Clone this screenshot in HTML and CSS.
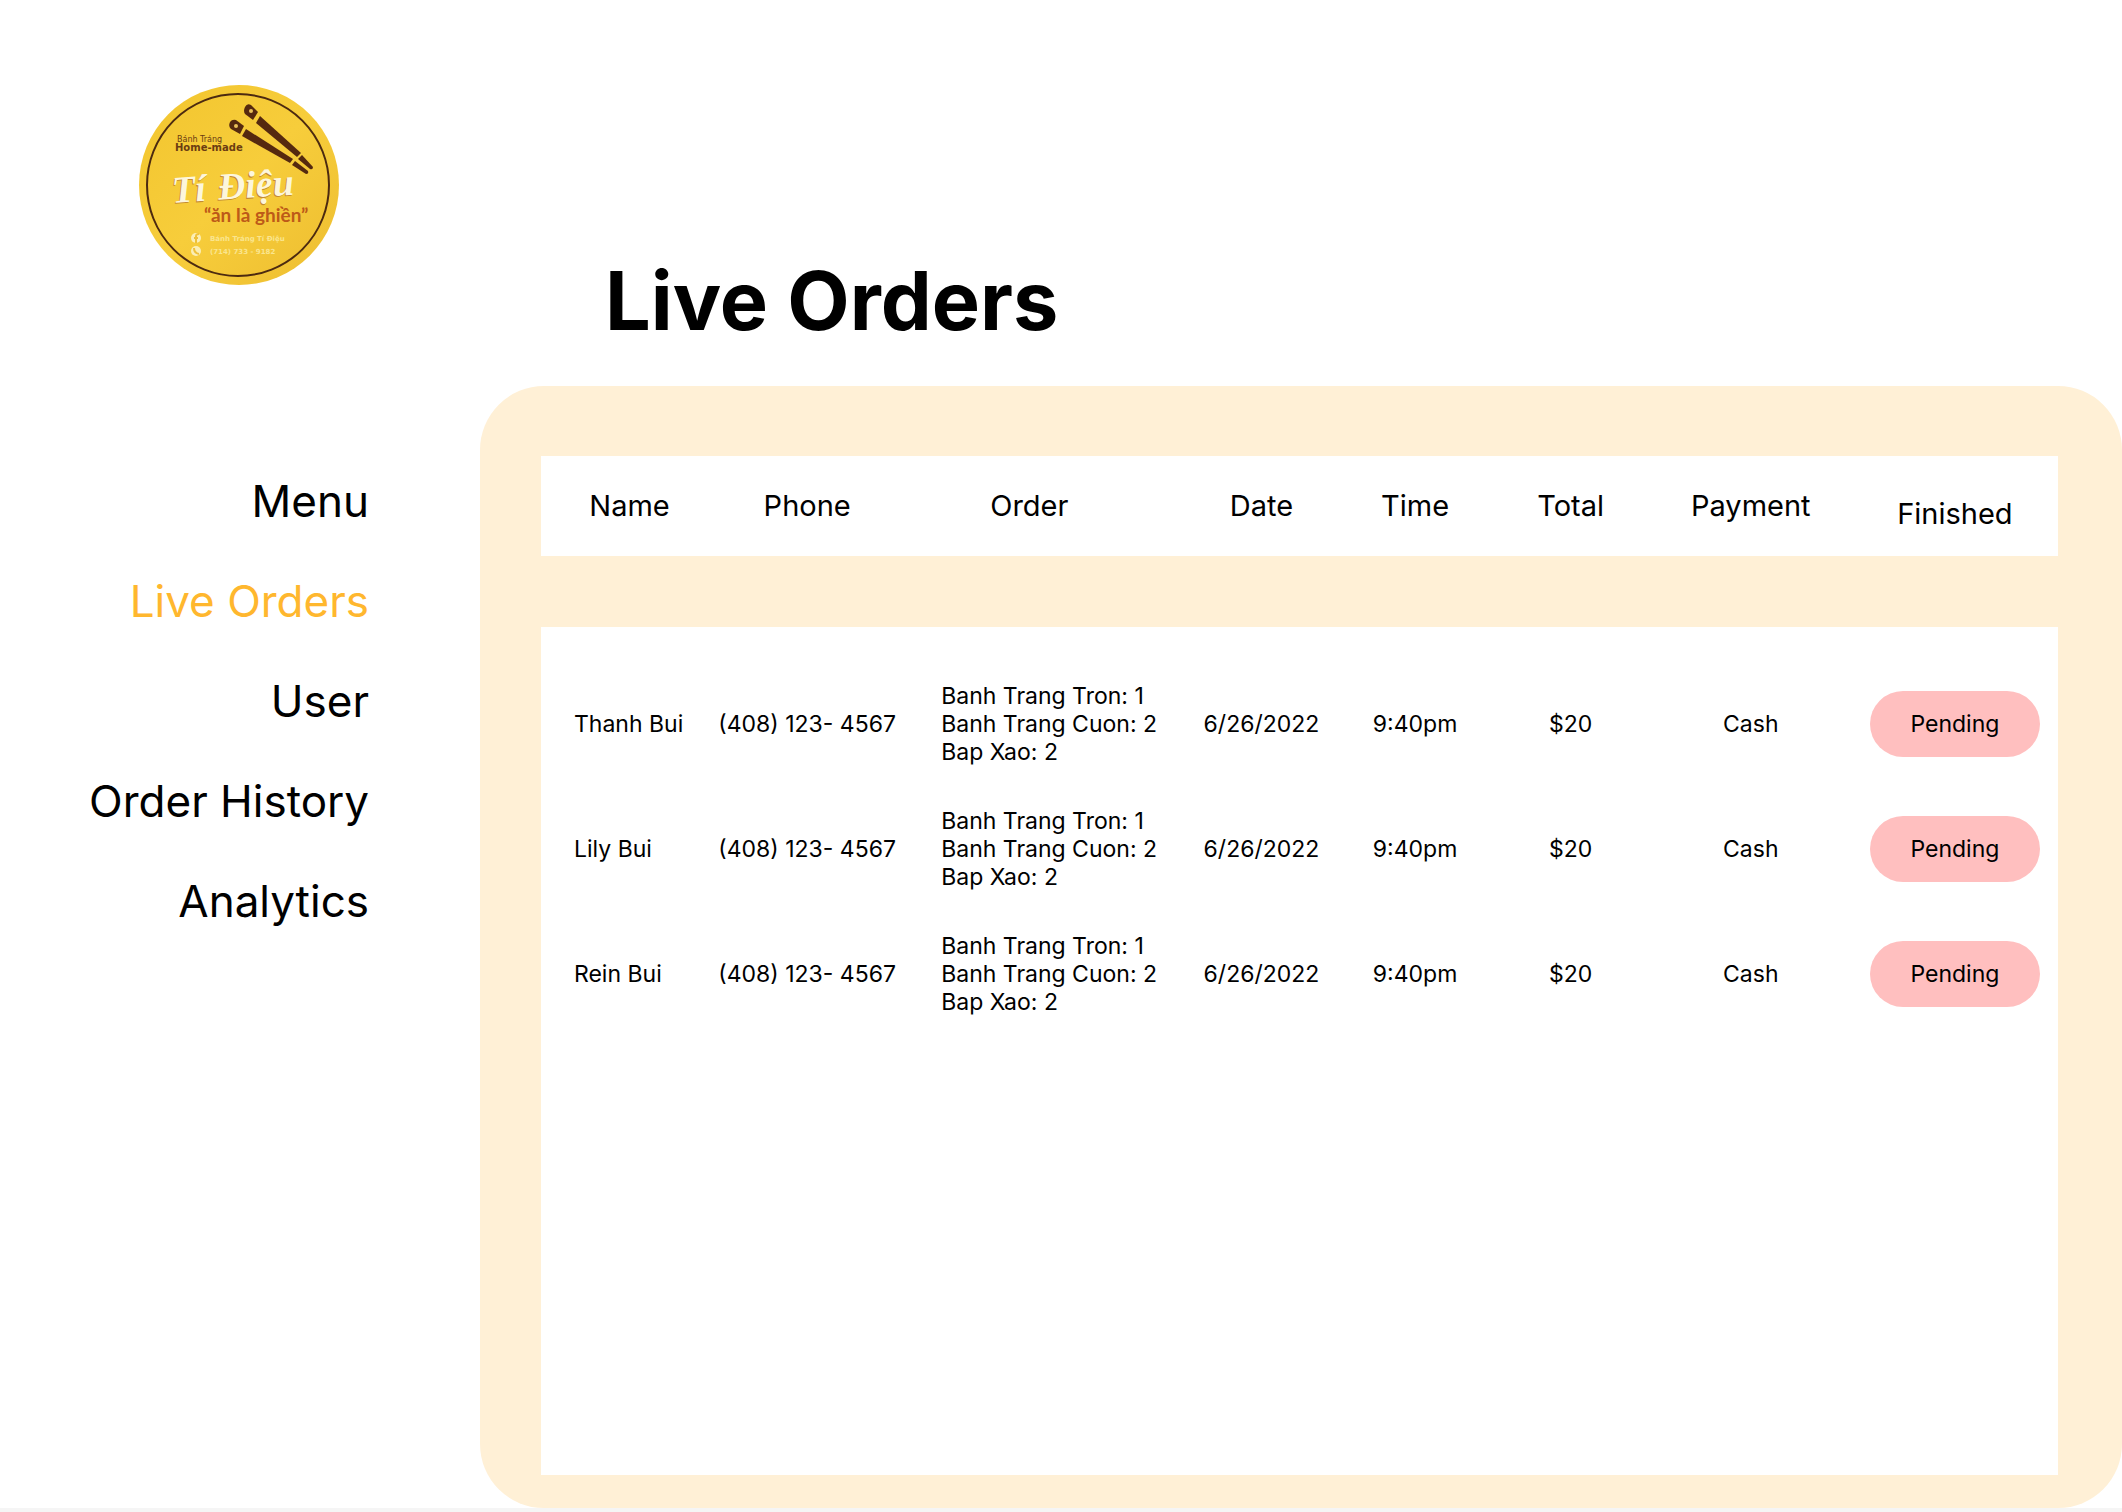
FILE: index.html
```html
<!DOCTYPE html>
<html lang="en">
<head>
  <meta charset="utf-8">
  <meta name="viewport" content="width=device-width, initial-scale=1">
  <title>Live Orders</title>
  <link rel="stylesheet" href="styles.css">
</head>
<body>
  <div class="app">
    <aside class="sidebar">
      <svg class="logo" viewBox="10 10 200 200" role="img" aria-label="Bánh Tráng Tí Điệu">
        <defs>
          <linearGradient id="disc" x1="0" y1="0" x2="1" y2="1">
            <stop offset="0" stop-color="#f2c52e"/>
            <stop offset="0.5" stop-color="#f7cd3b"/>
            <stop offset="1" stop-color="#edbd30"/>
          </linearGradient>
        </defs>
        <circle cx="110" cy="110" r="100" fill="url(#disc)"/>
        <circle class="logo-ring" cx="109" cy="110" r="91"/>
        <g class="chopsticks">
          <path d="M116 32q2-4 6-2l7 7-5 8-8-6q-2-3 0-7z"/>
          <path d="M131 41l41 37-4 4-41-34z"/>
          <path d="M173 80l11 12q0 3-3 2l-12-10z"/>
          <path d="M101 47q2-3 6-2l8 6-4 8-9-5q-3-3-1-7z"/>
          <path d="M117 54l47 30-3 4-48-27z"/>
          <path d="M166 86l13 10q1 3-2 3l-14-9z"/>
          <circle class="chopstick-dot" cx="122" cy="36" r="2"/>
          <circle class="chopstick-dot" cx="107" cy="51" r="2"/>
        </g>
        <text class="logo-kicker" x="48" y="67">Bánh Tráng</text>
        <text class="logo-made" x="46" y="76">Home-made</text>
        <g transform="rotate(-4 100 115)">
          <text class="logo-name logo-name-shade" x="42" y="125">Tí</text>
          <text class="logo-name logo-name-shade" x="88" y="125">Điệu</text>
          <text class="logo-name" x="43" y="124">Tí</text>
          <text class="logo-name" x="89" y="124">Điệu</text>
        </g>
        <text class="logo-slogan" x="75" y="147">“ăn là ghiền”</text>
        <circle class="logo-mark" cx="67" cy="163" r="5"/>
        <path class="logo-glyph" d="M67 168v-7q0-2 3-2M65 163h4"/>
        <circle class="logo-mark" cx="67" cy="176" r="5"/>
        <path class="logo-glyph" d="M65 173q0 5 5 6"/>
        <text class="logo-contact" x="81" y="166">Bánh Tráng Tí Điệu</text>
        <text class="logo-contact" x="81" y="179">(714) 733 - 9182</text>
      </svg>
      <nav class="nav" aria-label="Main">
        <a class="nav-link" href="#menu">Menu</a>
        <a class="nav-link nav-link-active" href="#live-orders" aria-current="page">Live Orders</a>
        <a class="nav-link" href="#user">User</a>
        <a class="nav-link" href="#order-history">Order History</a>
        <a class="nav-link" href="#analytics">Analytics</a>
      </nav>
    </aside>
    <main class="main">
      <h1 class="title">Live Orders</h1>
      <section class="panel">
        <table class="orders">
          <thead class="orders-head">
            <tr class="row">
              <th scope="col">Name</th>
              <th scope="col">Phone</th>
              <th scope="col">Order</th>
              <th scope="col">Date</th>
              <th scope="col">Time</th>
              <th scope="col">Total</th>
              <th scope="col">Payment</th>
              <th scope="col" class="finished">Finished</th>
            </tr>
          </thead>
          <tbody class="orders-body">
            <tr class="row">
              <td class="name">Thanh Bui</td>
              <td>(408) 123- 4567</td>
              <td class="items">Banh Trang Tron: 1<br>Banh Trang Cuon: 2<br>Bap Xao: 2</td>
              <td>6/26/2022</td>
              <td>9:40pm</td>
              <td>$20</td>
              <td>Cash</td>
              <td class="finished"><button class="status" type="button">Pending</button></td>
            </tr>
            <tr class="row">
              <td class="name">Lily Bui</td>
              <td>(408) 123- 4567</td>
              <td class="items">Banh Trang Tron: 1<br>Banh Trang Cuon: 2<br>Bap Xao: 2</td>
              <td>6/26/2022</td>
              <td>9:40pm</td>
              <td>$20</td>
              <td>Cash</td>
              <td class="finished"><button class="status" type="button">Pending</button></td>
            </tr>
            <tr class="row">
              <td class="name">Rein Bui</td>
              <td>(408) 123- 4567</td>
              <td class="items">Banh Trang Tron: 1<br>Banh Trang Cuon: 2<br>Bap Xao: 2</td>
              <td>6/26/2022</td>
              <td>9:40pm</td>
              <td>$20</td>
              <td>Cash</td>
              <td class="finished"><button class="status" type="button">Pending</button></td>
            </tr>
          </tbody>
        </table>
      </section>
    </main>
  </div>
</body>
</html>
```
FILE: styles.css
```css
* {
  box-sizing: border-box;
}

body {
  margin: 0;
  background: #ffffff;
  color: #000000;
  font-family: Inter, "Liberation Sans", sans-serif;
}

.app {
  display: grid;
  grid-template-columns: 480px minmax(0, 1fr);
  min-height: 100vh;
  border-bottom: 4px solid #f5f5f5;
}

/* Sidebar */

.sidebar {
  display: flex;
  flex-direction: column;
  padding: 85px 111px 40px 0;
}

.logo {
  width: 200px;
  height: 200px;
  margin-left: 139px;
}

.nav {
  display: flex;
  flex-direction: column;
  align-items: flex-end;
  gap: 47px;
  margin-top: 190px;
}

.nav-link {
  color: inherit;
  font-size: 44px;
  line-height: 53px;
  text-decoration: none;
  white-space: nowrap;
}

.nav-link-active {
  color: #ffb72e;
}

/* Logo */

.logo-ring {
  fill: none;
  stroke: #4c2a10;
  stroke-width: 2;
}

.chopsticks {
  fill: #55290f;
}

.chopstick-dot {
  fill: #e9c05a;
}

.logo-kicker,
.logo-made {
  fill: #6b3c12;
  font-family: "DejaVu Sans", sans-serif;
  font-weight: 700;
}

.logo-kicker {
  font-size: 8px;
  font-weight: 400;
}

.logo-made {
  font-size: 10px;
}

.logo-name {
  fill: #fdf6dc;
  font-family: "Liberation Serif", serif;
  font-size: 38px;
  font-style: italic;
  font-weight: 700;
}

.logo-name-shade {
  fill: #c48a34;
}

.logo-slogan {
  fill: #bd5a18;
  font-family: Lato, sans-serif;
  font-size: 19px;
  font-weight: 700;
}

.logo-mark {
  fill: #fbeeb4;
}

.logo-glyph {
  fill: none;
  stroke: #eec03a;
  stroke-width: 2;
}

.logo-contact {
  fill: #fae58e;
  font-family: "DejaVu Sans", sans-serif;
  font-size: 7px;
  font-weight: 700;
}

/* Main area */

.main {
  display: flex;
  flex-direction: column;
  padding-top: 253px;
}

.title {
  margin: 0 0 36px 125px;
  font-size: 81px;
  font-weight: 700;
  line-height: 97px;
}

.panel {
  display: flex;
  flex: 1;
  padding: 70px 64px 33px 61px;
  border-radius: 64px;
  background: #fff0d6;
}

/* Orders table: both row groups share one column grid */

.orders {
  display: flex;
  flex: 1;
  flex-direction: column;
  gap: 71px;
}

.orders-head,
.orders-body {
  display: block;
  background: #ffffff;
}

.orders-body {
  flex: 1;
  padding: 34px 0;
}

.row {
  display: grid;
  grid-template-columns: 177fr 178fr 266fr 198fr 109fr 202fr 158fr 228fr;
  align-items: center;
}

.orders-head .row {
  height: 100px;
}

.orders-body .row {
  height: 125px;
}

.row th,
.row td {
  padding: 0;
  text-align: center;
  white-space: nowrap;
}

.row th {
  font-size: 29px;
  font-weight: 400;
  line-height: 36px;
}

.row td {
  font-size: 23px;
  line-height: 28px;
}

.row .name {
  padding-left: 33px;
  text-align: left;
}

.row .items {
  padding-left: 45px;
  text-align: left;
}

.row .finished {
  padding-left: 22px;
}

.row th.finished {
  padding-top: 15px;
}

.status {
  width: 170px;
  height: 66px;
  padding: 0;
  border: 0;
  border-radius: 33px;
  background: #ffbfbf;
  color: inherit;
  font: inherit;
  cursor: pointer;
}
```
